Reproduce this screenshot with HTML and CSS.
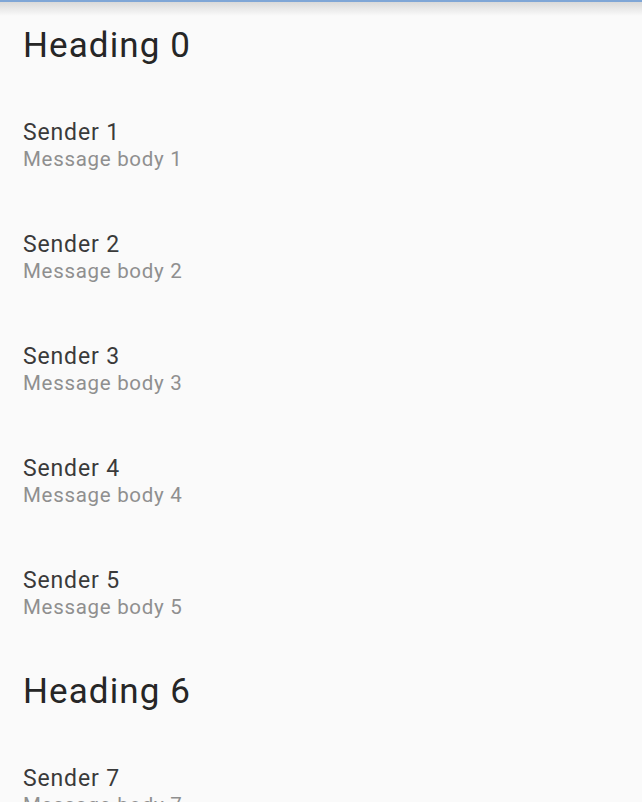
FILE: index.html
```html
<!DOCTYPE html>
<html>
<head>
<meta charset="utf-8">
<link rel="stylesheet" href="styles.css">
</head>
<body>
<div class="topbar"></div>
<div class="list">
  <div class="row heading-row"><div class="heading">Heading 0</div></div>
  <div class="row msg-row"><div class="sender">Sender 1</div><div class="body">Message body 1</div></div>
  <div class="row msg-row"><div class="sender">Sender 2</div><div class="body">Message body 2</div></div>
  <div class="row msg-row"><div class="sender">Sender 3</div><div class="body">Message body 3</div></div>
  <div class="row msg-row"><div class="sender">Sender 4</div><div class="body">Message body 4</div></div>
  <div class="row msg-row"><div class="sender">Sender 5</div><div class="body">Message body 5</div></div>
  <div class="row heading-row"><div class="heading">Heading 6</div></div>
  <div class="row msg-row"><div class="sender">Sender 7</div><div class="body">Message body 7</div></div>
</div>
</body>
</html>
```
FILE: styles.css
```css
html, body {
  margin: 0;
  padding: 0;
  background: #fafafa;
  overflow: hidden;
  height: 802px;
}
body {
  position: relative;
  font-family: Roboto, "Noto Sans", sans-serif;
}
.topbar {
  position: absolute;
  top: 0;
  left: 0;
  right: 0;
  height: 14px;
  border-top: 2px solid #7fa6d6;
  background: linear-gradient(#d9d9d9, rgba(250,250,250,0));
  z-index: 2;
}
.list {
  display: flex;
  flex-direction: column;
  padding-top: 3px;
}
.row {
  display: flex;
  flex-direction: column;
  justify-content: center;
  padding: 0 23px;
  flex: none;
}
.heading-row {
  height: 86px;
}
.msg-row {
  height: 112px;
  padding-top: 2px;
  box-sizing: border-box;
}
.heading {
  font-size: 35px;
  line-height: 40px;
  letter-spacing: 1.1px;
  color: #262626;
}
.sender {
  font-size: 23px;
  line-height: 27px;
  letter-spacing: 0.85px;
  color: #3a3a3a;
}
.body {
  font-size: 20.5px;
  line-height: 27px;
  letter-spacing: 0.7px;
  color: #8f8f8f;
}
```
